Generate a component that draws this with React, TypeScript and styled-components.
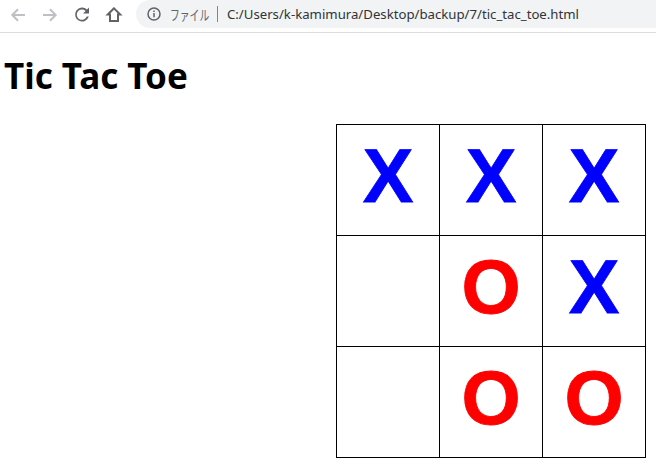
import React from "react";
import styled, { createGlobalStyle } from "styled-components";

const Global = createGlobalStyle`
  html, body { margin: 0; padding: 0; background: #fff; overflow: hidden; }
  body { width: 656px; height: 467px; }
`;

const Toolbar = styled.header`
  height: 32px;
  border-bottom: 1px solid #dadce0;
  display: flex;
  align-items: flex-start;
  overflow: hidden;
`;
const NavIcons = styled.nav`
  display: flex;
  align-items: center;
  gap: 8px;
  padding: 2px 0 0 6px;
  width: 136px;
  box-sizing: border-box;
  flex: none;
`;
const IconSlot = styled.span<{ $c: string }>`
  width: 24px;
  height: 24px;
  flex: none;
  display: flex;
  color: ${(p) => p.$c};
`;
const Omnibox = styled.div`
  flex: 1;
  height: 28px;
  background: #f1f3f4;
  border-radius: 14px 0 0 14px;
  display: flex;
  align-items: center;
  padding-left: 10px;
  color: #5f6368;
  white-space: nowrap;
`;
const Chip = styled.span`
  display: inline-block;
  flex: none;
  width: 39px;
  margin-left: 8px;
  font-family: "Noto Sans CJK JP", sans-serif;
  font-size: 14px;
  transform: scaleX(0.7);
  transform-origin: left center;
`;
const Divider = styled.i`
  flex: none;
  width: 1px;
  height: 16px;
  background: #80868b;
  margin: 0 9px 0 8px;
`;
const Url = styled.span`
  font-family: "Noto Sans", sans-serif;
  font-size: 13.2px;
  color: #303438;
`;
const Page = styled.main`
  display: flex;
  flex-direction: column;
  padding: 0 10px 0 4px;
`;
const Title = styled.h1`
  margin: 20px 0 0;
  height: 46px;
  font-family: "Noto Sans", sans-serif;
  font-weight: 700;
  font-size: 35px;
  line-height: 46px;
  color: #000;
`;
const Board = styled.div`
  align-self: flex-end;
  margin-top: 25px;
  display: grid;
  grid-template-columns: repeat(3, 102px);
  grid-auto-rows: 110px;
  gap: 1px;
  background: #000;
  border: 1px solid #000;
`;
const Cell = styled.div<{ $mark: string; $font: string }>`
  background: #fff;
  display: flex;
  align-items: center;
  justify-content: center;
  padding-bottom: 9px;
  font-family: ${(p) => p.$font};
  font-weight: 700;
  font-size: 76px;
  -webkit-text-stroke: 0.8px currentColor;
  line-height: 1;
  color: ${(p) => (p.$mark === "X" ? "#0000ff" : "#ff0000")};
`;

const Back = () => (
  <svg width="24" height="24" viewBox="0 0 24 24"><path d="M19 13H6.5M12 7.3 6.3 13l5.7 5.7" fill="none" stroke="currentColor" strokeWidth="2" /></svg>
);
const Forward = () => (
  <svg width="24" height="24" viewBox="0 0 24 24"><path d="M5 13h12.5M12 7.3l5.7 5.7-5.7 5.7" fill="none" stroke="currentColor" strokeWidth="2" /></svg>
);
const Reload = () => (
  <svg width="24" height="24" viewBox="0 0 24 24"><path d="M17 7.5A7 7 0 1 0 18.8 14.5h-2a5.2 5.2 0 1 1-1.2-5.6L13 11.5h6V5.5z" fill="currentColor" /></svg>
);
const Home = () => (
  <svg width="24" height="24" viewBox="0 0 24 24"><path d="M12 6.3 5.8 12.5H8V19h8v-6.5h2.2z" fill="none" stroke="currentColor" strokeWidth="2" /></svg>
);
const Info = () => (
  <svg width="16" height="16" viewBox="0 0 16 16" style={{ flex: "none" }}><circle cx="8" cy="8" r="6" fill="none" stroke="#5f6368" strokeWidth="1.5" /><path d="M7.25 7h1.5v4.2h-1.5zM7.25 4.6h1.5v1.5h-1.5z" fill="#5f6368" /></svg>
);

const marks = ["X", "X", "X", "", "O", "X", "", "O", "O"];

export default function App() {
  return (
    <>
      <Global />
      <Toolbar>
        <NavIcons>
          <IconSlot $c="#bdc1c6"><Back /></IconSlot>
          <IconSlot $c="#bdc1c6"><Forward /></IconSlot>
          <IconSlot $c="#5f6368"><Reload /></IconSlot>
          <IconSlot $c="#5f6368"><Home /></IconSlot>
        </NavIcons>
        <Omnibox>
          <Info />
          <Chip>ファイル</Chip>
          <Divider />
          <Url>C:/Users/k-kamimura/Desktop/backup/7/tic_tac_toe.html</Url>
        </Omnibox>
      </Toolbar>
      <Page>
        <Title>Tic Tac Toe</Title>
        <Board>
          {marks.map((m, i) => (
            <Cell key={i} $mark={m} $font={'"Liberation Sans"'}>{m}</Cell>
          ))}
        </Board>
      </Page>
    </>
  );
}
